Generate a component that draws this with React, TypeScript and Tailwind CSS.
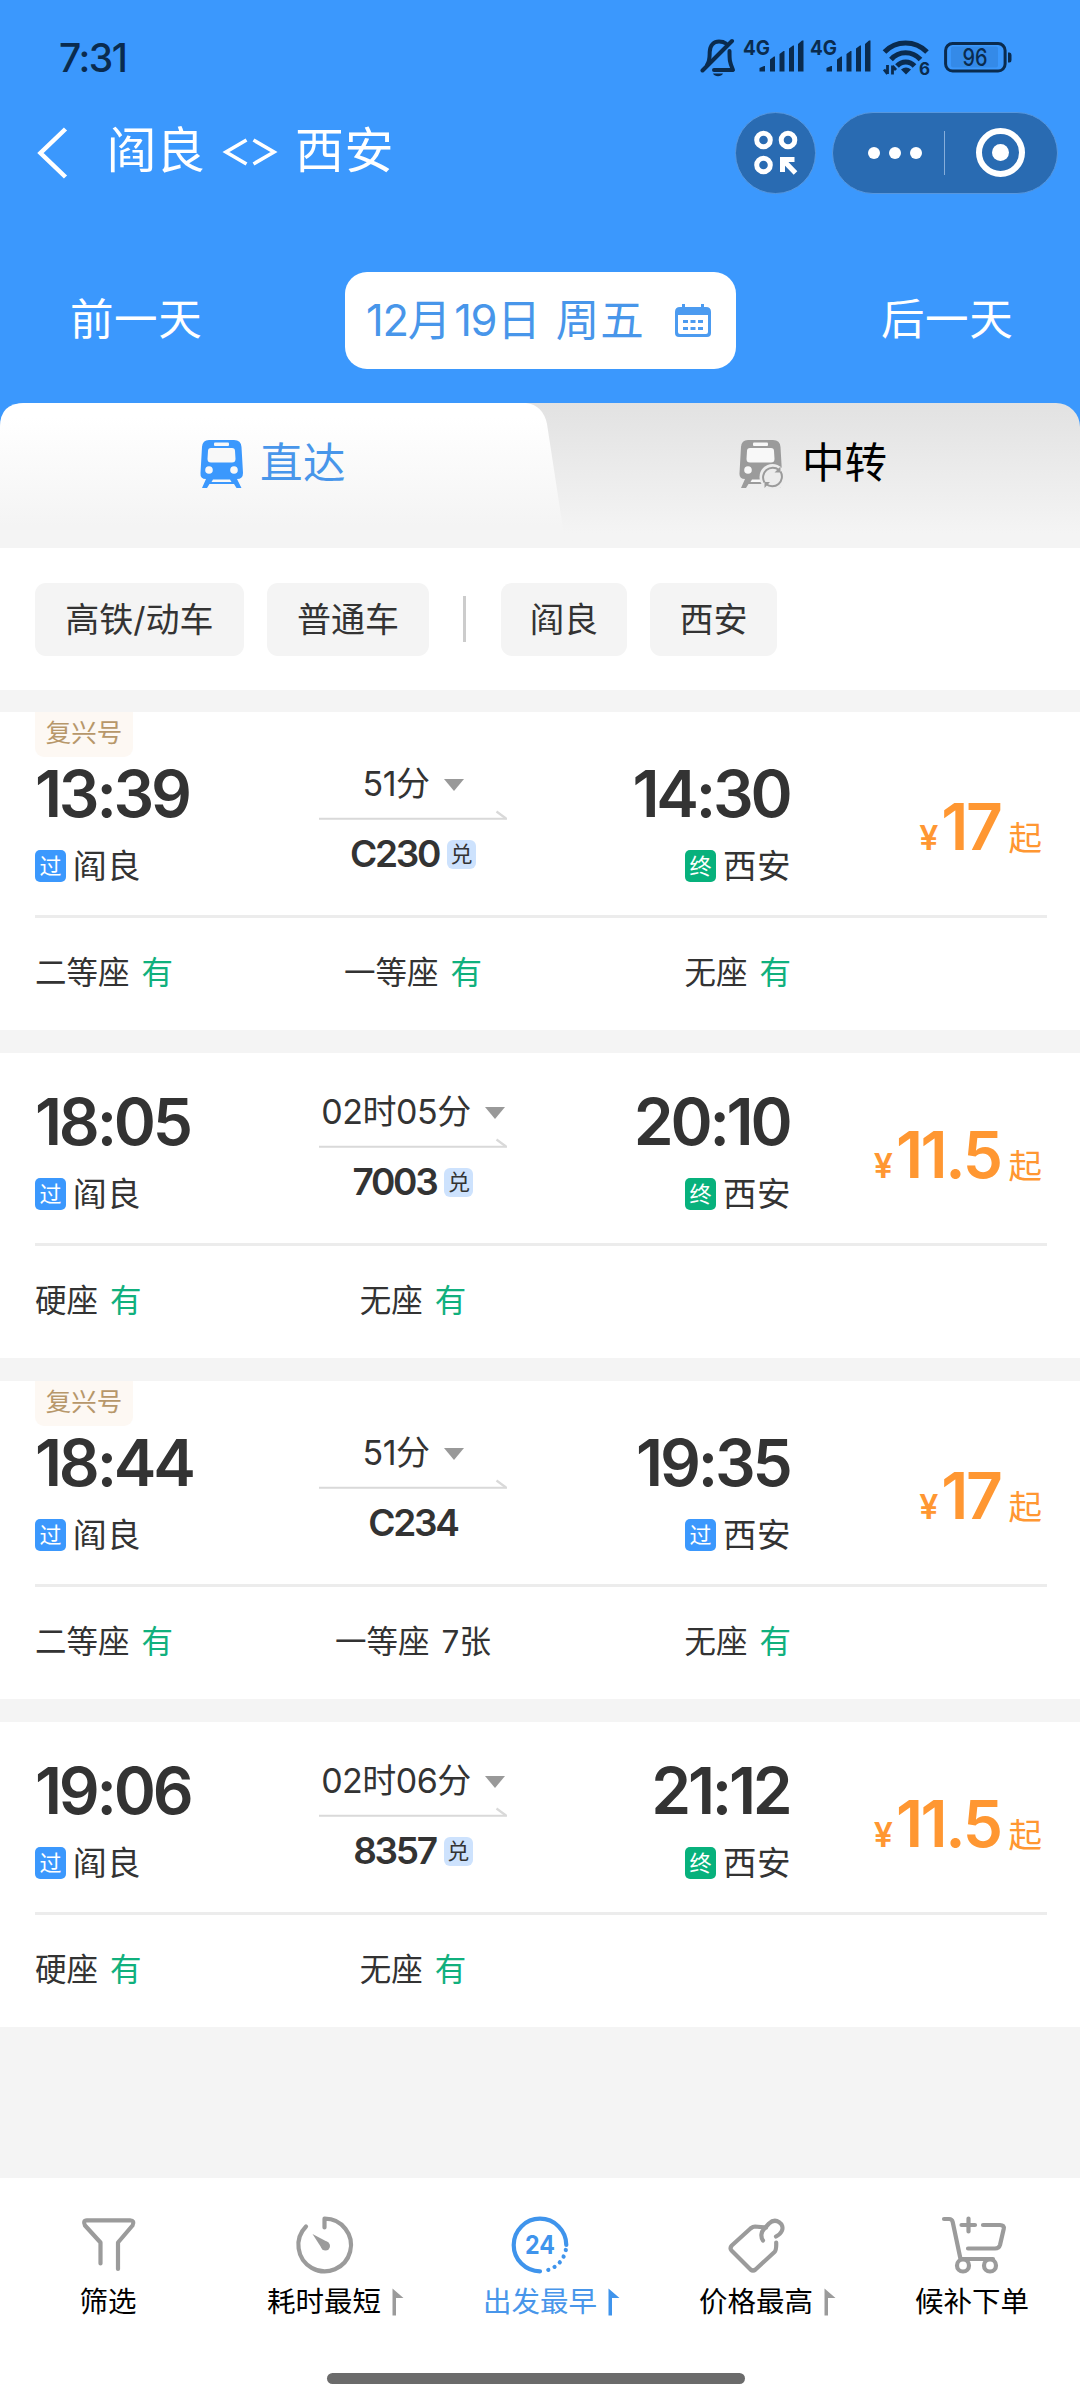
import type { ReactNode } from "react";

type Seat = { name: string; left: string; available: boolean };
type Train = {
  tag?: string;
  depart: string;
  arrive: string;
  duration: string;
  code: string;
  exchange: boolean;
  terminal: boolean;
  price: string;
  seats: Seat[];
};

const yes = (name: string): Seat => ({ name, left: "有", available: true });

const TRAINS: Train[] = [
  {
    tag: "复兴号",
    depart: "13:39",
    arrive: "14:30",
    duration: "51分",
    code: "C230",
    exchange: true,
    terminal: true,
    price: "17",
    seats: [yes("二等座"), yes("一等座"), yes("无座")],
  },
  {
    depart: "18:05",
    arrive: "20:10",
    duration: "02时05分",
    code: "7003",
    exchange: true,
    terminal: true,
    price: "11.5",
    seats: [yes("硬座"), yes("无座")],
  },
  {
    tag: "复兴号",
    depart: "18:44",
    arrive: "19:35",
    duration: "51分",
    code: "C234",
    exchange: false,
    terminal: false,
    price: "17",
    seats: [yes("二等座"), { name: "一等座", left: "7张", available: false }, yes("无座")],
  },
  {
    depart: "19:06",
    arrive: "21:12",
    duration: "02时06分",
    code: "8357",
    exchange: true,
    terminal: true,
    price: "11.5",
    seats: [yes("硬座"), yes("无座")],
  },
];

function Signal() {
  return (
    <svg width="67" height="40" viewBox="0 0 67 40" fill="#0a2b4e">
      <text x="0" y="18.500" fontSize="20" fontWeight="700" textLength="27" lengthAdjust="spacingAndGlyphs">
        4G
      </text>
      <path d="M16.5 35.500V32l4.500-2H22v5.500h-5zM27 35.500V23.500l4-3h1V35.500zM36.500 35.500V18l4-3h1V35.500zM46 35.500V12.500l4-3h1V35.500zM55 35.500V8l4-3.500h1.500V35.500z" />
    </svg>
  );
}

function StatusBar() {
  return (
    <div className="flex h-[104px] items-start text-[#0a2b4e]">
      <span className="ml-[59px] mt-[34px] w-[80px] text-[39px] leading-[48px] font-medium tracking-[-1.5px]">7:31</span>
      <div className="mt-[36px] ml-[561px] flex">
        <svg width="43" height="42" viewBox="0 0 43 42" fill="none" stroke="#0a2b4e" strokeWidth="4" strokeLinecap="round">
          <path d="M2.500 34.500L32 5" />
          <path d="M7 29C10 25 9.500 21 9.700 16C10 9 14 5.500 19 5.500C22 5.500 24 6 26 7.500" />
          <path d="M29.500 15C29.500 24 29.500 26 33 34H14" strokeLinejoin="round" />
          <path d="M13 37.500H23C21.500 41 14.500 41 13 37.500Z" fill="#0a2b4e" stroke="none" />
        </svg>
        <Signal />
        <Signal />
        <svg className="ml-[5px]" width="50" height="42" viewBox="0 0 50 42" fill="none" stroke="#0a2b4e" strokeWidth="5">
          <path d="M2.500 16C14 4 33 4 45 16" />
          <path d="M9 23.500C17 14.500 30 14.500 38.500 23.500" />
          <path d="M15 30C20 24.500 27.500 24.500 32.500 30" />
          <path d="M19 33.500Q24 29.500 29 33.500L24 38.500Z" fill="#0a2b4e" stroke="none" />
          <path d="M5.500 29V38M5.500 38L2 33.500M10.500 38.500V29.500M10.500 30L14 34" strokeWidth="2.800" />
          <text x="37" y="38.800" fontSize="17" fontWeight="700" fill="#0a2b4e" stroke="none">
            6
          </text>
        </svg>
        <svg className="ml-[12px]" width="72" height="42" viewBox="0 0 72 42">
          <rect x="7" y="10.500" width="47" height="21" rx="2" fill="#348ae8" />
          <rect x="1.600" y="7.600" width="59.500" height="27.500" rx="7" fill="none" stroke="#0a2b4e" strokeWidth="3" />
          <path d="M64 16.500H65.500Q67.500 16.500 67.500 19V24Q67.500 26.500 65.500 26.500H64Z" fill="#0a2b4e" />
          <text x="18.500" y="30" fontSize="24" fontWeight="500" fill="#0a2b4e" textLength="25" lengthAdjust="spacingAndGlyphs">
            96
          </text>
        </svg>
      </div>
    </div>
  );
}

function NavBar() {
  return (
    <div className="flex h-[97px] items-center text-white">
      <svg className="ml-[36px]" width="34" height="56" viewBox="0 0 34 56" fill="none" stroke="white" strokeWidth="4.500">
        <path d="M29.500 4L4.500 28L29.500 52" />
      </svg>
      <h1 className="ml-[37px] flex w-[628px] items-center text-[49px] leading-none">
        <span className="pb-[4px]">阎良</span>
        <svg className="ml-[17px] mr-[17px]" width="56" height="32" viewBox="0 0 56 32" fill="none" stroke="white" strokeWidth="3.600">
          <path d="M24.500 3L4 15L24.500 27M31.500 3L52 15L31.500 27" />
        </svg>
        <span className="pb-[4px] tracking-[0.500px]">西安</span>
      </h1>
      <div className="flex h-[82px] w-[81px] items-center justify-center rounded-full border border-[#5797de] bg-[#296bb2]">
        <svg width="46" height="46" viewBox="0 0 46 46" fill="none" stroke="white" strokeWidth="5">
          <circle cx="10.500" cy="10" r="6.800" />
          <circle cx="35" cy="10" r="6.800" />
          <circle cx="10.500" cy="35" r="6.800" />
          <path d="M29.500 42V29.500H41.500M30 30L42.500 43" strokeWidth="5" />
        </svg>
      </div>
      <div className="ml-[16px] flex h-[82px] w-[226px] items-center rounded-full border border-[#5797de] bg-[#296bb2]">
        <div className="ml-[35px] flex gap-[9px]">
          <i className="size-[12px] rounded-full bg-white" />
          <i className="size-[12px] rounded-full bg-white" />
          <i className="size-[12px] rounded-full bg-white" />
        </div>
        <div className="ml-[22px] h-[44px] w-[1px] bg-[#86aedb]" />
        <div className="ml-[31px] flex size-[49px] items-center justify-center rounded-full border-[6px] border-white">
          <i className="size-[17px] rounded-full bg-white" />
        </div>
      </div>
    </div>
  );
}

function DateBar() {
  return (
    <div className="mt-[71px] flex h-[97px] items-center text-[43.500px] text-white">
      <span className="ml-[70px] w-[275px] pb-[2px] tracking-[0.600px]">前一天</span>
      <div className="flex h-[97px] w-[391px] items-center rounded-[22px] bg-white text-[#4896ea]">
        <span className="ml-[21px] w-[279px]">
          <span className="tracking-[-1.300px]">12</span>月<span className="ml-[3px] tracking-[-1.300px]">19</span>
          <span className="ml-[1px]">日</span>
          <span className="ml-[15px] tracking-[1px]">周五</span>
        </span>
        <svg className="ml-[29px]" width="38" height="36" viewBox="0 0 38 36">
          <path d="M1 9Q1 4 6 4H8V1H11V4H27V1H30V4H32Q37 4 37 9V30Q37 34 33 34H5Q1 34 1 30ZM4 12V29Q4 31 6 31H32Q34 31 34 29V12Z" fill="#4c9bf0" fillRule="evenodd" />
          <path d="M9 18.500H29M9 25.500H29" stroke="#4c9bf0" strokeWidth="2.800" strokeDasharray="5 2.500" />
        </svg>
      </div>
      <span className="ml-[145px] pb-[2px] tracking-[0.600px]">后一天</span>
    </div>
  );
}

function TrainIcon({ color, transfer }: { color: string; transfer?: boolean }) {
  return (
    <svg width="46" height="50" viewBox="0 0 46 50">
      <path d="M9 1H34Q41 1 41.500 8L43 34Q43 40 37 40H6Q0 40 0.500 34L2 8Q2.500 1 9 1Z" fill={color} />
      <path d="M6 40L2 49H7L9.500 45H34L36.500 49H41.500L37 40Z" fill={color} />
      <rect x="14" y="3.500" width="15" height="3.500" rx="1" fill="#f8f8f8" />
      <path d="M11 9H32Q35 9 35 12L35.500 20Q35.500 23.500 32 23.500H11Q7.500 23.500 7.500 20L8 12Q8 9 11 9Z" fill="#f8f8f8" />
      <circle cx="9" cy="31" r="3.800" fill="#f8f8f8" />
      <circle cx="34" cy="31" r="3.800" fill="#f8f8f8" />
      <path d="M13 40.500H30L31.500 43H11.500Z" fill="#f8f8f8" />
      {transfer && (
        <g>
          <circle cx="33.500" cy="38" r="13" fill="#ececec" />
          <path d="M25.500 43.500A9.700 9.700 0 0 1 40 31M41.500 32.500A9.700 9.700 0 0 1 27 45" fill="none" stroke={color} strokeWidth="2" />
          <path d="M41.500 27.500V33.500H35.500ZM25.500 49V43L31 43Z" fill={color} />
        </g>
      )}
    </svg>
  );
}

function Tabs() {
  return (
    <div className="relative h-[145px] overflow-hidden bg-[#3b98fd]">
      <div className="absolute inset-0 rounded-t-[24px] bg-linear-to-b from-[#e2e2e2] to-[#f4f4f4] to-90%" />
      <svg className="absolute left-0 top-0" width="600" height="145" viewBox="0 0 600 145">
        <defs>
          <linearGradient id="activeTab" x1="0" y1="0" x2="0" y2="1">
            <stop offset="0.100" stopColor="#ffffff" />
            <stop offset="0.850" stopColor="#f4f4f4" />
          </linearGradient>
        </defs>
        <path d="M0 24Q0 0 24 0H526Q543 2 547 21L566 145H0Z" fill="url(#activeTab)" />
      </svg>
      <div className="relative flex h-[121px] items-center text-[42.500px]">
        <div className="ml-[200px] flex w-[539px] items-center text-[#4896ea]">
          <TrainIcon color="#3b98fd" />
          <span className="ml-[14px] pb-[1px] tracking-[0.500px]">直达</span>
        </div>
        <div className="flex items-center text-black">
          <TrainIcon color="#9b9b9b" transfer />
          <span className="ml-[17px] pb-[1px]">中转</span>
        </div>
      </div>
    </div>
  );
}

function Pill({ children, width }: { children: ReactNode; width: string }) {
  return <div className={`flex h-[73px] items-center justify-center rounded-[11px] bg-[#f4f4f4] ${width}`}>{children}</div>;
}

function Filters() {
  return (
    <div className="flex h-[142px] items-center bg-white pl-[35px] text-[34px] text-[#333]">
      <Pill width="w-[209px]">高铁/动车</Pill>
      <div className="w-[23px]" />
      <Pill width="w-[162px]">普通车</Pill>
      <div className="mx-[34px] h-[46px] w-[3px] bg-[#ccc]" />
      <div className="w-[1px]" />
      <Pill width="w-[126px]">阎良</Pill>
      <div className="w-[23px]" />
      <Pill width="w-[127px]">西安</Pill>
    </div>
  );
}

function Station({ mark, green, name }: { mark: string; green?: boolean; name: string }) {
  return (
    <div className="flex items-center">
      <span
        className={`flex h-[32px] w-[31px] items-center justify-center rounded-[5px] pb-[1px] text-[22px] leading-none text-white ${
          green ? "bg-[#07b17c]" : "bg-[#3b98fd]"
        }`}
      >
        {mark}
      </span>
      <span className="ml-[7px] text-[33.500px] leading-[40px] tracking-[0.500px]">{name}</span>
    </div>
  );
}

function TrainCard({ train }: { train: Train }) {
  const columns = ["w-[283px]", "w-[190px] text-center", "w-[283px] text-right"];
  return (
    <article className={`relative bg-white pl-[35px] pr-[33px] text-[#333] ${train.tag ? "h-[318px] pt-[46px]" : "h-[305px] pt-[33px]"}`}>
      {train.tag && (
        <span className="absolute left-[35px] top-0 flex h-[45px] w-[98px] items-center justify-center rounded-b-[9px] bg-[#fdf8f3] pb-[2px] text-[25.500px] text-[#b7976a]">
          {train.tag}
        </span>
      )}
      <div className="grid h-[157px] grid-cols-[283px_190px_283px_252px]">
        <div>
          <div className="mt-[1px] h-[70px] text-[64px] leading-[70px] font-semibold tracking-[-3.200px]">{train.depart}</div>
          <div className="mt-[17px]">
            <Station mark="过" name="阎良" />
          </div>
        </div>
        <div className="flex flex-col items-center">
          <div className="flex h-[52px] items-center text-[34px] leading-[52px]">
            <span className="tracking-[-0.500px]">{train.duration}</span>
            <svg className="ml-[14px] mt-[1px]" width="20" height="12" viewBox="0 0 20 12">
              <path d="M0 0H20L10 12Z" fill="#999" />
            </svg>
          </div>
          <svg width="190" height="10" viewBox="0 0 190 10" fill="none" stroke="#d9d9d9">
            <path d="M1 8.700H189" strokeWidth="2" />
            <path d="M178.500 1.500L188 8.500" strokeWidth="2.200" />
          </svg>
          <div className="mt-[10px] flex h-[48px] items-center text-[37px] leading-[48px] font-semibold">
            <span className="tracking-[-2.300px]">{train.code}</span>
            {train.exchange && (
              <span className="ml-[8px] flex size-[29px] items-center justify-center rounded-[6px] bg-[#cde2fd] pb-[1px] text-[22px] leading-none font-normal">
                兑
              </span>
            )}
          </div>
        </div>
        <div className="flex flex-col items-end">
          <div className="mt-[1px] -mr-[0.500px] h-[70px] pr-[2px] text-[64px] leading-[70px] font-semibold tracking-[-3.200px]">{train.arrive}</div>
          <div className="mt-[17px]">
            <Station mark={train.terminal ? "终" : "过"} green={train.terminal} name="西安" />
          </div>
        </div>
        <div className="flex items-baseline justify-end pr-[1px] pt-[34px] text-[#ff9732]">
          <span className="text-[34px] font-semibold">¥</span>
          <span className="ml-[3px] text-[64px] leading-[70px] font-semibold tracking-[-2.400px]">{train.price}</span>
          <span className="ml-[8px] text-[33.500px] leading-none">起</span>
        </div>
      </div>
      <div className="mr-[0.500px] h-[3px] bg-[#ececec]" />
      <div className="flex h-[110px] items-center text-[31.500px]">
        {train.seats.map((seat, index) => (
          <div key={seat.name} className={columns[index]}>
            {seat.name}
            <span className={seat.available ? "ml-[12px] text-[#10b07d]" : "ml-[12px]"}>{seat.left}</span>
          </div>
        ))}
      </div>
    </article>
  );
}

function NavItem({ label, flag, active, children }: { label: string; flag?: boolean; active?: boolean; children: ReactNode }) {
  return (
    <div className="flex w-[216px] flex-col items-center pt-[36px]">
      <svg
        className="overflow-visible"
        width="62"
        height="62"
        viewBox="0 0 62 62"
        fill="none"
        stroke={active ? "#3f94ec" : "#9b9b9b"}
        strokeWidth="4.200"
        strokeLinecap="round"
        strokeLinejoin="round"
      >
        {children}
      </svg>
      <span className={`relative mt-[6px] text-[28.500px] leading-[40px] ${active ? "text-[#4896ea]" : "text-black"}`}>
        {label}
        {flag && (
          <svg className="absolute -right-[23px] top-[6px]" width="12" height="28" viewBox="0 0 12 28">
            <path d="M0.500 0.500L11.500 10H4V27.500H0.500Z" fill={active ? "#3f94ec" : "#9b9b9b"} />
          </svg>
        )}
      </span>
    </div>
  );
}

function BottomNav() {
  return (
    <nav className="relative flex h-[222px] bg-white">
      <NavItem label="筛选">
        <path d="M23.500 49.500V28.500L8 11.500Q5.500 6.500 10 6.300H53Q58 6.500 55.500 11.500L41 28.500V55" />
      </NavItem>
      <NavItem label="耗时最短" flag>
        <path d="M31.500 13.500V4.700A26.300 26.300 0 1 1 13 12.500" />
        <path d="M19.500 20L35.500 28.500L29.500 35.500Z" fill="#9b9b9b" stroke="none" />
        <circle cx="32.500" cy="32" r="4.500" fill="#9b9b9b" stroke="none" />
      </NavItem>
      <NavItem label="出发最早" flag active>
        <path d="M31 57.300A26.300 26.300 0 1 1 57.300 31" />
        <path d="M56.800 36A26.300 26.300 0 0 1 36 56.800" strokeDasharray="0.010 6.900" />
        <text x="31" y="40.300" fontSize="25" fontWeight="700" textAnchor="middle" textLength="30" lengthAdjust="spacingAndGlyphs" fill="#3f94ec" stroke="none">
          24
        </text>
      </NavItem>
      <NavItem label="价格最高" flag>
        <path d="M41 13.500L30 12.500Q28 12.500 25.500 14.500L6.800 31.500Q4.500 34 6.500 36.500L25.500 55.500Q28 57.500 30.500 55.500L49.500 38Q51.500 36 51.200 28.500" />
        <path d="M38 26.500C35.500 23 36 18 39 15L44 9.500C51 3 60 10 56.800 17Q55.500 20 51 22.500" />
      </NavItem>
      <NavItem label="候补下单">
        <path d="M3 5H8Q11 5 11.700 8L19.500 45H52" />
        <path d="M42 11H59Q63.500 11 62.700 15L59 31Q58 34.500 54 34.500H27M20.500 11H34M27.500 4.500V17.500" />
        <circle cx="22" cy="51.500" r="6" fill="white" />
        <circle cx="49" cy="51.500" r="6" fill="white" />
      </NavItem>
      <div className="absolute left-[327px] top-[195px] h-[11px] w-[418px] rounded-full bg-[#6b6b6b]" />
    </nav>
  );
}

export default function App() {
  return (
    <main className="h-[2400px] w-[1080px] overflow-hidden bg-[#f4f4f4] font-['Inter','Noto_Sans_CJK_SC',sans-serif] whitespace-nowrap">
      <header className="h-[403px] bg-[#3b98fd]">
        <StatusBar />
        <NavBar />
        <DateBar />
      </header>
      <Tabs />
      <Filters />
      <section className="mt-[22px] flex h-[1466px] flex-col gap-[23px]">
        {TRAINS.map((train) => (
          <TrainCard key={train.depart} train={train} />
        ))}
      </section>
      <BottomNav />
    </main>
  );
}
